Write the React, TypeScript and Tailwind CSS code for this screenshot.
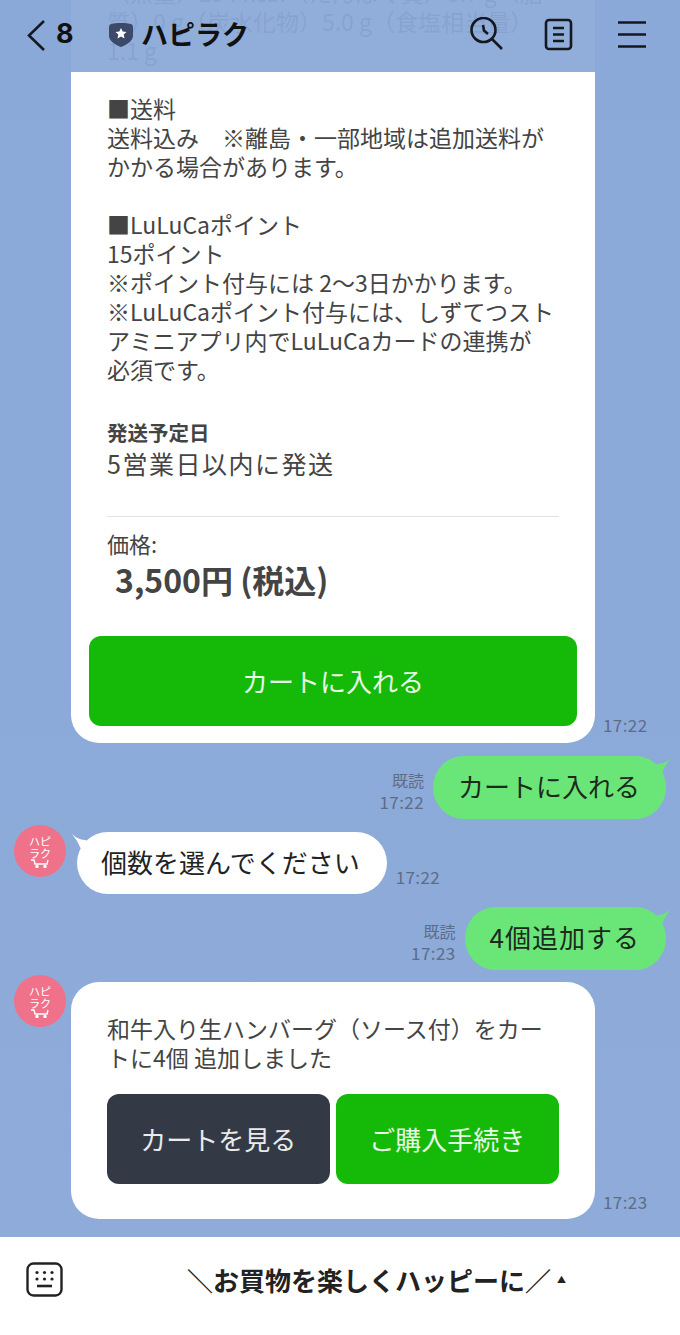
import React from "react";

const jp = "font-['Noto_Sans_CJK_JP','Noto_Sans',sans-serif]";

function Avatar() {
  return (
    <div className="-mt-[7px] flex h-[52px] w-[52px] shrink-0 flex-col items-center justify-center rounded-full bg-[#f0728a] text-white">
      <div className="w-[24px] text-center text-[11px] leading-[12px]">ハピラク</div>
      <svg width="20" height="9" viewBox="0 0 20 9" fill="none" stroke="white" strokeWidth="1.4">
        <path d="M1 1h3l1 4h12l1-4" />
        <circle cx="7" cy="7.5" r="1" fill="white" />
        <circle cx="15" cy="7.5" r="1" fill="white" />
      </svg>
    </div>
  );
}

function Time({ read, time }: { read?: boolean; time: string }) {
  return (
    <div className="mb-[7px] flex flex-col items-end text-[17px] leading-[21px] tracking-[0.4px] text-[#5e6c87]">
      {read && <span className="text-[16px] tracking-normal">既読</span>}
      <span>{time}</span>
    </div>
  );
}

function SentBubble({ text, time, wide }: { text: string; time: string; wide?: boolean }) {
  return (
    <div className="flex items-end justify-end gap-[9px] pr-[14px]">
      <Time read time={time} />
      <div
        className={`relative flex h-[63px] items-center rounded-[31px] bg-[#6ae678] pr-[26px] pb-[4px] pl-[25px] text-[26px] text-[#1c2a1e] ${
          wide ? "tracking-[1px]" : ""
        }`}
      >
        {text}
        <svg className="absolute top-0 -right-[5px]" width="24" height="20" viewBox="0 0 24 20">
          <path d="M10 8Q18 8 24 2Q18 9 15 17L5 17Z" fill="#6ae678" />
        </svg>
      </div>
    </div>
  );
}

function Logo() {
  return (
    <svg width="24" height="26" viewBox="0 0 24 26">
      <path d="M2 3C6 1.5 18 1.5 22 3Q24 3.5 24 6V15C24 20 17 24 12 26C7 24 0 20 0 15V6Q0 3.5 2 3Z" fill="#3a4a68" />
      <path d="M12 7l1.7 3.5 3.8.5-2.8 2.6.8 3.8-3.5-2-3.5 2 .8-3.8-2.8-2.6 3.8-.5Z" fill="white" />
    </svg>
  );
}

function Header() {
  return (
    <div className="absolute inset-x-0 top-0 flex h-[72px] items-start bg-[#8aa9d9]/94 pr-[34px] text-[#111]">
      <svg className="mt-[20px] ml-[26px]" width="20" height="32" viewBox="0 0 20 32" fill="none" stroke="#15191f" strokeWidth="2.6">
        <path d="M18 1L3 15.5L18 30" />
      </svg>
      <span className="mt-[14px] ml-[10px] w-[18px] font-['Inter',sans-serif] text-[27px] leading-[40px] font-bold">8</span>
      <div className="mt-[21px] ml-[35px]">
        <Logo />
      </div>
      <span className="mt-[14px] ml-[8px] text-[27px] leading-[40px] font-bold">ハピラク</span>
      <div className="ml-auto flex items-start gap-[40px]">
        <svg className="mt-[17px]" width="34" height="34" viewBox="0 0 34 34" fill="none" stroke="#15191f" strokeWidth="2.6">
          <circle cx="13.5" cy="13" r="12" />
          <path d="M13 8L14 13.5L18 17M22 22L32 32" />
        </svg>
        <svg className="mt-[18px]" width="30" height="33" viewBox="0 0 30 33" fill="none" stroke="#15191f" strokeWidth="2.6">
          <rect x="2" y="2" width="25" height="29" rx="3" />
          <path d="M9 10h11M9 16.5h11M9 23h11" />
        </svg>
        <svg className="mt-[21px] ml-[4px]" width="28" height="27" viewBox="0 0 28 27" fill="none" stroke="#15191f" strokeWidth="2.6">
          <path d="M0 1.5h28M0 13.5h28M0 25.5h28" />
        </svg>
      </div>
    </div>
  );
}

const detailLines = [
  "（熱量）294 kcal（たんぱく質）8.7 g（脂",
  "質）0 g（炭水化物）5.0 g（食塩相当量）",
  "1.1 g",
  "\u00a0",
  "■送料",
  "送料込み　※離島・一部地域は追加送料が",
  "かかる場合があります。",
  "\u00a0",
  "■LuLuCaポイント",
  "15ポイント",
  "※ポイント付与には 2〜3日かかります。",
  "※LuLuCaポイント付与には、しずてつスト",
  "アミニアプリ内でLuLuCaカードの連携が",
  "必須です。",
];

export default function App() {
  return (
    <div className={`relative flex h-[1335px] w-[680px] flex-col overflow-hidden bg-[#8aa9d9] ${jp}`}>
      <div className="flex min-h-0 flex-1 flex-col justify-end gap-[13px] overflow-hidden bg-gradient-to-b from-[#8aa9d9] to-[#8eabd9] pb-[18px]">
        <div className="flex items-end gap-2 pl-[71px]">
          <div className="w-[524px] shrink-0 rounded-b-[28px] bg-white px-[18px] pb-[17px] text-[#444]">
            <div className="px-[18px]">
              <div className="text-[23px] leading-[29px] whitespace-nowrap">
                {detailLines.map((line, i) => (
                  <div key={i}>{line}</div>
                ))}
              </div>
              <div className="mt-[34px] text-[20.5px] leading-[29px] font-bold">発送予定日</div>
              <div className="-mt-[1px] text-[25px] leading-[34px] tracking-[1.5px]">5営業日以内に発送</div>
              <div className="mt-[36px] border-t border-[#e2e2e2] pt-[12px] text-[22px] leading-[28px]">価格:</div>
              <div className="mt-[2px] pl-[8px] text-[32px] leading-[40px] font-bold">3,500円 (税込)</div>
            </div>
            <div className="mt-[37px] flex h-[90px] items-center justify-center rounded-[12px] bg-[#15b907] pb-[2px] text-[26px] text-white/90">
              カートに入れる
            </div>
          </div>
          <div className="mb-[1px]">
            <Time time="17:22" />
          </div>
        </div>

        <SentBubble text="カートに入れる" time="17:22" />

        <div className="flex items-end gap-[11px] pl-[14px]">
          <div className="self-start">
            <Avatar />
          </div>
          <div className="relative flex h-[62px] items-center rounded-[31px] bg-white pr-[27px] pb-[4px] pl-[24px] text-[26px] text-[#222]">
            個数を選んでください
            <svg className="absolute top-0 -left-[5px]" width="24" height="20" viewBox="0 0 24 20">
              <path d="M14 8Q6 8 0 2Q6 9 9 17L19 17Z" fill="white" />
            </svg>
          </div>
          <div className="-ml-[2px]">
            <Time time="17:22" />
          </div>
        </div>

        <SentBubble text="4個追加する" time="17:23" wide />

        <div className="-mt-[1px] flex items-end gap-[5px] pl-[14px]">
          <div className="self-start">
            <Avatar />
          </div>
          <div className="w-[524px] shrink-0 rounded-[28px] bg-white px-[36px] pt-[32px] pb-[35px] text-[#444]">
            <div className="text-[23px] leading-[29px] whitespace-nowrap">
              <div>和牛入り生ハンバーグ（ソース付）をカー</div>
              <div>トに4個 追加しました</div>
            </div>
            <div className="mt-[22px] flex gap-[6px]">
              <div className="flex h-[90px] w-[223px] items-center justify-center rounded-[12px] bg-[#343a45] pb-[2px] text-[26px] text-white/90">
                カートを見る
              </div>
              <div className="flex h-[90px] w-[224px] items-center justify-center rounded-[12px] bg-[#15b907] pb-[2px] text-[26px] text-white/90">
                ご購入手続き
              </div>
            </div>
          </div>
          <div className="ml-[3px]">
            <Time time="17:23" />
          </div>
        </div>
      </div>

      <div className="flex h-[98px] shrink-0 items-start bg-white pt-[25px]">
        <svg className="ml-[26px]" width="37" height="36" viewBox="0 0 37 36" fill="none" stroke="#222" strokeWidth="2.4">
          <rect x="1.5" y="1.5" width="34" height="32" rx="6" />
          <path d="M11 24h15" strokeWidth="2.6" />
          <g fill="#222" stroke="none">
            <circle cx="11" cy="10.5" r="1.6" />
            <circle cx="18.5" cy="10.5" r="1.6" />
            <circle cx="26" cy="10.5" r="1.6" />
            <circle cx="11" cy="17" r="1.6" />
            <circle cx="18.5" cy="17" r="1.6" />
            <circle cx="26" cy="17" r="1.6" />
          </g>
        </svg>
        <div className="ml-[124px] flex items-center text-[26px] leading-[36px] font-bold text-[#222]">
          <span>＼お買物を楽しくハッピーに／</span>
          <span className="ml-[6px] text-[9px] leading-[12px]">▲</span>
        </div>
      </div>

      <Header />
    </div>
  );
}
